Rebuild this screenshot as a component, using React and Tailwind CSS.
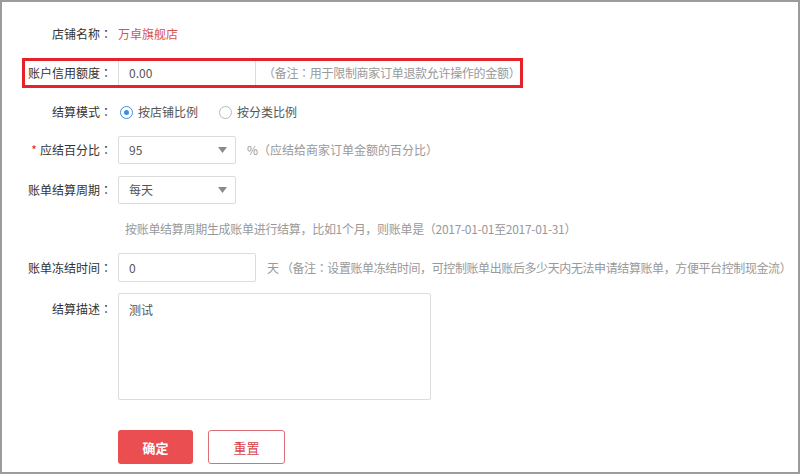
import React from "react";

const font = { fontFamily: '"Noto Sans CJK SC", sans-serif' };

function C() {
  return (
    <span lang="zh-Hant-TW" className="font-['Noto_Sans_CJK_TC',sans-serif]">
      ：
    </span>
  );
}

function Label({ children, required }) {
  return (
    <div className="w-[100px] shrink-0 text-right text-[#333]">
      {required && <span className="mr-[3px] text-[#e8202a]">*</span>}
      {children}
      <C />
    </div>
  );
}

function Arrow() {
  return (
    <svg width="9" height="6" viewBox="0 0 9 6" className="shrink-0">
      <path d="M0 0 H9 L4.5 6 Z" fill="#8a8a8a" />
    </svg>
  );
}

function Select({ value }) {
  return (
    <div className="ml-[6px] flex h-[28px] w-[118px] items-center justify-between rounded-[2px] border border-[#dcdcdc] bg-white pl-[10px] pr-[8px] text-[#555]">
      <span>{value}</span>
      <Arrow />
    </div>
  );
}

function Radio({ checked, children, className = "" }) {
  return (
    <div className={"flex items-center " + className}>
      <span
        className={
          "flex h-[13px] w-[13px] items-center justify-center rounded-full border " +
          (checked ? "border-[#3d8ee2]" : "border-[#b8b8b8]")
        }
      >
        {checked && <span className="h-[5px] w-[5px] rounded-full bg-[#3d8ee2]" />}
      </span>
      <span className="ml-[5px] text-[#555]">{children}</span>
    </div>
  );
}

export default function App() {
  return (
    <div
      className="box-border h-[474px] w-[800px] overflow-hidden border-2 border-[#9b9b9b] bg-white pt-[18px] text-[12px] leading-none"
      style={font}
    >
      {/* 店铺名称 */}
      <div className="ml-[10px] flex h-[28px] items-center">
        <Label>店铺名称</Label>
        <span className="ml-[6px] text-[#d9534f]">万卓旗舰店</span>
      </div>

      {/* 账户信用额度 (highlighted) */}
      <div className="ml-[20px] mt-[10px] flex h-[30px] w-[501px] items-center border-[3px] border-[#e8202a]">
        <div className="w-[87px] shrink-0 text-right text-[#333]">
          账户信用额度<C />
        </div>
        <div className="ml-[6px] flex h-full w-[138px] shrink-0 items-center border-x border-[#dcdcdc] pl-[10px] text-[#555]">
          0.00
        </div>
        <span className="ml-[7px] whitespace-nowrap tracking-[-0.3px] text-[#999]">
          （备注<C />用于限制商家订单退款允许操作的金额）
        </span>
      </div>

      {/* 结算模式 */}
      <div className="ml-[10px] mt-[10px] flex h-[28px] items-center">
        <Label>结算模式</Label>
        <Radio checked className="ml-[8px]">按店铺比例</Radio>
        <Radio className="ml-[21px]">按分类比例</Radio>
      </div>

      {/* 应结百分比 */}
      <div className="ml-[10px] mt-[10px] flex h-[28px] items-center">
        <Label required>应结百分比</Label>
        <Select value="95" />
        <span className="ml-[11px] whitespace-nowrap text-[#999]">%（应结给商家订单金额的百分比）</span>
      </div>

      {/* 账单结算周期 */}
      <div className="ml-[10px] mt-[12px] flex h-[28px] items-center">
        <Label>账单结算周期</Label>
        <Select value="每天" />
      </div>

      {/* helper */}
      <div className="ml-[10px] mt-[11px] flex h-[28px] items-center">
        <div className="w-[100px] shrink-0" />
        <span className="ml-[13px] whitespace-nowrap tracking-[-0.3px] text-[#999]">
          按账单结算周期生成账单进行结算，比如1个月，则账单是（2017-01-01至2017-01-31）
        </span>
      </div>

      {/* 账单冻结时间 */}
      <div className="ml-[10px] mt-[10px] flex h-[29px] items-center">
        <Label>账单冻结时间</Label>
        <div className="ml-[6px] flex h-full w-[138px] shrink-0 items-center rounded-[2px] border border-[#dcdcdc] pl-[10px] text-[#555]">
          0
        </div>
        <span className="ml-[11px] whitespace-nowrap tracking-[-0.4px] text-[#999]">
          天 （备注<C />设置账单冻结时间，可控制账单出账后多少天内无法申请结算账单，方便平台控制现金流）
        </span>
      </div>

      {/* 结算描述 */}
      <div className="ml-[10px] mt-[11px] flex items-start">
        <div className="w-[100px] shrink-0 pt-[10px] text-right text-[#333]">
          结算描述<C />
        </div>
        <div className="ml-[6px] h-[107px] w-[313px] rounded-[2px] border border-[#dcdcdc] pl-[10px] pt-[10px] text-[#555]">
          测试
        </div>
      </div>

      {/* buttons */}
      <div className="ml-[116px] mt-[30px] flex items-center">
        <button className="flex h-[34px] w-[75px] items-center justify-center rounded-[3px] bg-[#eb4e51] text-[13px] font-bold text-white">
          确定
        </button>
        <button className="ml-[15px] flex h-[34px] w-[77px] items-center justify-center rounded-[3px] border border-[#dc7078] bg-white text-[13px] text-[#d9434b]">
          重置
        </button>
      </div>
    </div>
  );
}
